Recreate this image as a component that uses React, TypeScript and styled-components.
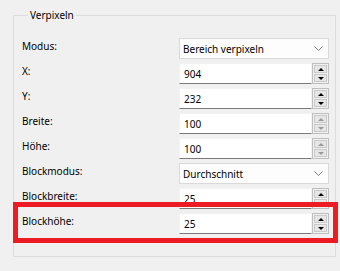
import React from 'react';
import styled, { createGlobalStyle } from 'styled-components';

const GlobalStyle = createGlobalStyle`
  html, body {
    margin: 0;
    background: #f0f0f0;
  }
  body {
    font-family: 'Noto Sans', 'Open Sans', sans-serif;
    font-size: 10px;
    color: #000;
  }
`;

const Page = styled.div`
  width: 340px;
  height: 271px;
  padding: 8px 0 0 13px;
  box-sizing: border-box;
`;

const Group = styled.fieldset`
  box-sizing: border-box;
  width: 323px;
  height: 249px;
  margin: 0;
  padding: 16px 0 0 8px;
  border: 1px solid #dcdcdc;
  min-width: 0;
`;

const Title = styled.legend`
  margin-left: 6px;
  padding: 0 2px;
  line-height: 14px;
`;

const Form = styled.div`
  display: grid;
  grid-template-columns: 157px 150px;
  row-gap: 4px;
`;

const Row = styled.div<{ $marked?: boolean }>`
  display: contents;
`;

const Label = styled.div`
  line-height: 14px;
  padding-top: 1px;
`;

const FieldCell = styled.div`
  position: relative;
  height: 21px;
`;

const Marker = styled.div`
  position: absolute;
  top: -11px;
  bottom: -9px;
  left: -166px;
  right: -9px;
  border: 5px solid #ed1c24;
  pointer-events: none;
`;

const Combo = styled.div`
  box-sizing: border-box;
  height: 21px;
  display: flex;
  align-items: center;
  justify-content: space-between;
  padding: 0 5px 0 3px;
  background: #fdfdfd;
  border: 1px solid #d9d9d9;
`;

const Spinner = styled.div`
  display: flex;
  height: 21px;
`;

const NumberBox = styled.div`
  box-sizing: border-box;
  flex: 1;
  display: flex;
  align-items: center;
  padding-left: 4px;
  background: #fff;
  border: 1px solid #f3f3f3;
  border-bottom-color: #7a7a7a;
`;

const SpinButtons = styled.div`
  box-sizing: border-box;
  width: 17px;
  display: flex;
  flex-direction: column;
  gap: 1px;
  padding: 1px;
  border: 1px solid #bfbfbf;
  background: #f0f0f0;
`;

const SpinButton = styled.div`
  flex: 1;
  display: flex;
  align-items: center;
  justify-content: center;
  background: #e6e6e6;
  border: 1px solid #cacaca;
  box-sizing: border-box;
`;

const Arrow = styled.div<{ $down?: boolean; $dim?: boolean }>`
  width: 0;
  height: 0;
  border-left: 3px solid transparent;
  border-right: 3px solid transparent;
  ${(p) =>
    p.$down
      ? `border-top: 3px solid ${p.$dim ? '#9a9a9a' : '#000'};`
      : `border-bottom: 3px solid ${p.$dim ? '#9a9a9a' : '#000'};`}
`;

const Chevron = () => (
  <svg width="9" height="5" viewBox="0 0 9 5">
    <path d="M0.5 0.5 L4.5 4.5 L8.5 0.5" fill="none" stroke="#7d7d7d" strokeWidth="1" />
  </svg>
);

type Field =
  | { label: string; kind: 'combo'; value: string; marked?: boolean }
  | { label: string; kind: 'spin'; value: string; dim?: boolean; marked?: boolean };

const fields: Field[] = [
  { label: 'Modus:', kind: 'combo', value: 'Bereich verpixeln' },
  { label: 'X:', kind: 'spin', value: '904' },
  { label: 'Y:', kind: 'spin', value: '232' },
  { label: 'Breite:', kind: 'spin', value: '100', dim: true },
  { label: 'Höhe:', kind: 'spin', value: '100', dim: true },
  { label: 'Blockmodus:', kind: 'combo', value: 'Durchschnitt' },
  { label: 'Blockbreite:', kind: 'spin', value: '25' },
  { label: 'Blockhöhe:', kind: 'spin', value: '25', marked: true },
];

export default function App(): JSX.Element {
  return (
    <Page>
      <GlobalStyle />
      <Group>
        <Title>Verpixeln</Title>
        <Form>
          {fields.map((f) => (
            <Row key={f.label}>
              <Label>{f.label}</Label>
              <FieldCell>
                {f.kind === 'combo' ? (
                  <Combo>
                    <span>{f.value}</span>
                    <Chevron />
                  </Combo>
                ) : (
                  <Spinner>
                    <NumberBox>{f.value}</NumberBox>
                    <SpinButtons>
                      <SpinButton>
                        <Arrow $dim={f.dim} />
                      </SpinButton>
                      <SpinButton>
                        <Arrow $down $dim={f.dim} />
                      </SpinButton>
                    </SpinButtons>
                  </Spinner>
                )}
                {f.marked && <Marker />}
              </FieldCell>
            </Row>
          ))}
        </Form>
      </Group>
    </Page>
  );
}
